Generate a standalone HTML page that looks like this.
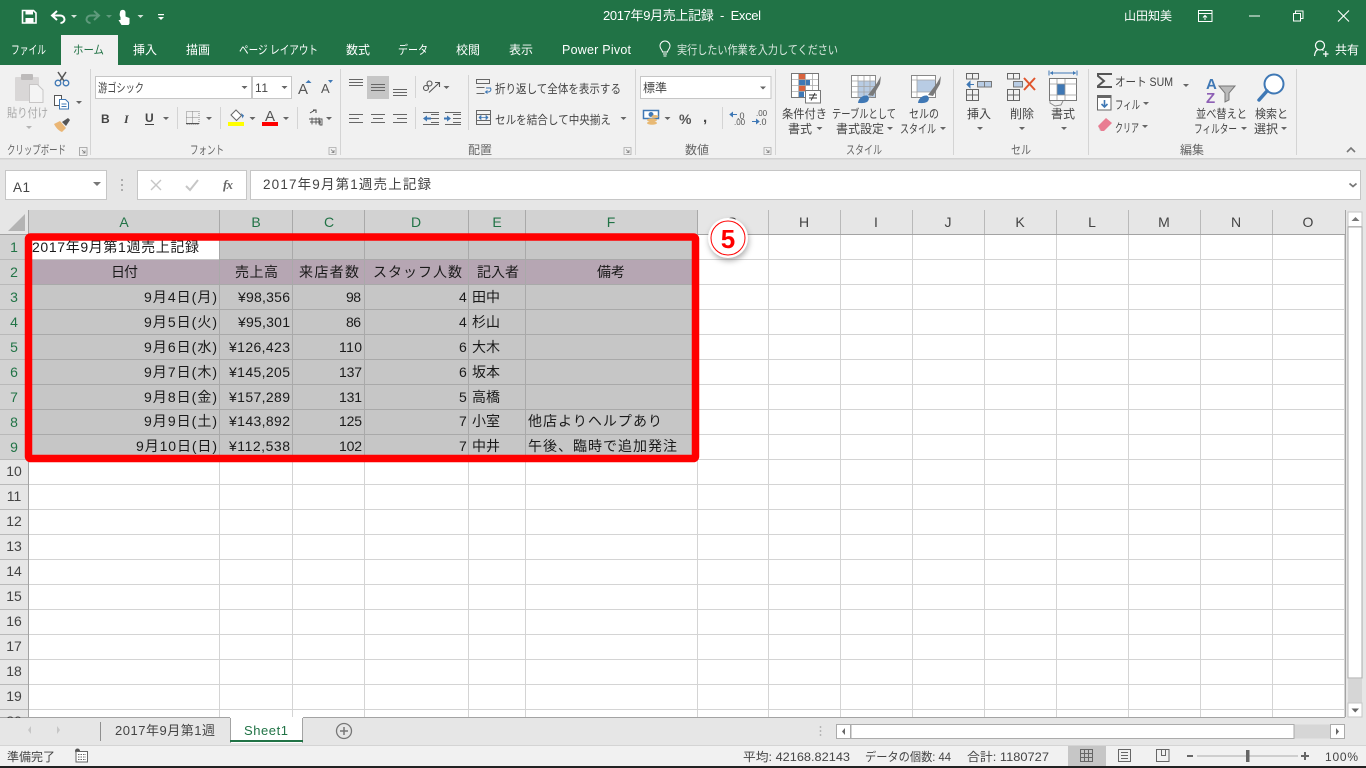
<!DOCTYPE html>
<html lang="ja">
<head>
<meta charset="utf-8">
<title>2017年9月売上記録 - Excel</title>
<style>
html,body{margin:0;padding:0;width:1366px;height:768px;overflow:hidden;background:#e6e6e6}
svg{display:block;position:absolute;left:0;top:0}
text{font-family:"Liberation Sans","Noto Sans CJK JP",sans-serif;white-space:pre}
.w{fill:#fff;font-size:12px}
.t{fill:#fff;font-size:12px}
.r{fill:#444;font-size:12px}
.g{fill:#666;font-size:12px}
.c{fill:#1a1a1a;font-size:14px}
.h{fill:#217346;font-size:14px}
.n{fill:#444;font-size:14px}
</style>
</head>
<body>
<svg width="1366" height="768" viewBox="0 0 1366 768" xmlns="http://www.w3.org/2000/svg">
<!-- Backgrounds -->
<rect width="1366" height="768" fill="#e6e6e6"/>
<rect width="1366" height="65" fill="#217346"/>
<rect y="65" width="1366" height="93" fill="#f1f1f1"/>
<rect y="158" width="1366" height="1.5" fill="#d2d2d2"/>
<rect x="61" y="35" width="57" height="30" fill="#f1f1f1"/>

<!-- QAT -->
<path d="M22.5 10.5h11l2.5 2.5v10h-13.500z" fill="none" stroke="#fff" stroke-width="1.600"/>
<rect x="25.500" y="10.500" width="7.500" height="4" fill="#fff"/><rect x="25.500" y="18" width="8" height="5" fill="#fff"/>
<path d="M57 11l-5 4.500 5 4.500M52.500 15.500h7.500c3.500 0 4.500 2.500 4.500 4s-1.500 3.500-4 3.500" fill="none" stroke="#fff" stroke-width="2"/>
<path d="M71 15h6l-3 3z" fill="#d4e4da"/>
<path d="M94 11l5 4.500-5 4.500M98.500 15.500H91c-3.500 0-4.500 2.500-4.500 4s1.500 3.500 4 3.500" fill="none" stroke="#5f9a7c" stroke-width="2"/>
<path d="M106 15h6l-3 3z" fill="#5f9a7c"/>
<g transform="translate(0 1)">
<path d="M120 11.500c0-3.500 5.500-3.500 5.500 0v4l4 1.500v5.500l-1 1.500h-7l-3-5 2 0v-3c-1-1-1-3-.5-4.500z" fill="#fff"/>
</g>
<path d="M137.500 15h6l-3 3z" fill="#d4e4da"/>
<rect x="158" y="14" width="6" height="1.200" fill="#fff"/><path d="M158 17h6l-3 3z" fill="#fff"/>

<!-- Title -->
<text x="603" y="20" class="t" textLength="158" style="font-size:13px">2017年9月売上記録  -  Excel</text>
<text x="1124" y="20" class="t" textLength="48" style="font-size:12px">山田知美</text>
<path d="M1198.500 10.500h13.500v11h-13.500zM1198.500 13.500h13.500M1205 20v-4M1203 17.500l2-2 2 2" fill="none" stroke="#fff"/>
<rect x="1249" y="15.500" width="11" height="1" fill="#fff"/>
<path d="M1293.500 13.500h7v7.500h-7zM1295.500 13.500v-2.500h7.500v7.500h-2.500" fill="none" stroke="#fff"/>
<path d="M1338 10.500l11 11M1349 10.500l-11 11" stroke="#fff" stroke-width="1.100"/>

<!-- Tabs -->
<text x="11" y="54" class="w" textLength="35" lengthAdjust="spacingAndGlyphs">ファイル</text>
<text x="73" y="54" style="fill:#217346;font-size:12px" textLength="31" lengthAdjust="spacingAndGlyphs">ホーム</text>
<text x="133" y="54" class="w" textLength="24">挿入</text>
<text x="186" y="54" class="w" textLength="24">描画</text>
<text x="239" y="54" class="w" textLength="79" lengthAdjust="spacingAndGlyphs">ページ レイアウト</text>
<text x="346" y="54" class="w" textLength="24">数式</text>
<text x="398" y="54" class="w" textLength="30" lengthAdjust="spacingAndGlyphs">データ</text>
<text x="456" y="54" class="w" textLength="24">校閲</text>
<text x="509" y="54" class="w" textLength="24">表示</text>
<text x="562" y="54" class="w" textLength="69" style="font-size:12.500px">Power Pivot</text>
<path d="M662.500 52c0-2-2.500-3-2.500-6a5 5 0 0 1 10 0c0 3-2.500 4-2.500 6zM663 54h4M663.500 56h3" fill="none" stroke="#fff"/>
<text x="677" y="54" style="fill:#dbe8e0;font-size:12px" textLength="161" lengthAdjust="spacingAndGlyphs">実行したい作業を入力してください</text>
<circle cx="1320" cy="45.500" r="4.500" fill="none" stroke="#fff" stroke-width="1.200"/>
<path d="M1314.500 56c.5-4.500 2-6 3.500-6.500M1322 49.500l1.500 1M1323 54h5.500M1325.800 51v6" fill="none" stroke="#fff" stroke-width="1.200"/>
<text x="1335" y="54" class="w" textLength="24">共有</text>

<!-- Ribbon separators -->
<g fill="#d4d4d4">
<rect x="90" y="69" width="1" height="86"/><rect x="340" y="69" width="1" height="86"/><rect x="635" y="69" width="1" height="86"/><rect x="775" y="69" width="1" height="86"/><rect x="953" y="69" width="1" height="86"/><rect x="1088" y="69" width="1" height="86"/><rect x="1296" y="69" width="1" height="86"/>
<rect x="177" y="107" width="1" height="22"/><rect x="220" y="107" width="1" height="22"/><rect x="297" y="107" width="1" height="22"/>
<rect x="415" y="76" width="1" height="22"/><rect x="415" y="107" width="1" height="22"/><rect x="468" y="75" width="1" height="55"/><rect x="722" y="107" width="1" height="22"/>
</g>

<!-- Clipboard -->
<rect x="15" y="77" width="24" height="24" rx="1" fill="#d9d7d7"/>
<rect x="21" y="74" width="12" height="6" rx="1" fill="#bdbbbb"/>
<path d="M29.500 84.500h8l5.500 5.500v12.500H29.500z" fill="#f4f4f4" stroke="#c8c6c6"/>
<text x="7" y="117" textLength="41" lengthAdjust="spacingAndGlyphs" style="fill:#a8a8a8;font-size:12px">貼り付け</text>
<path d="M26 126h6l-3 3z" fill="#b5b5b5"/>
<path d="M58 72l6 9M66 72l-6 9" stroke="#555" stroke-width="1.500"/>
<circle cx="58" cy="83" r="2.800" fill="none" stroke="#3f78b5" stroke-width="1.300"/><circle cx="66" cy="83" r="2.800" fill="none" stroke="#3f78b5" stroke-width="1.300"/>
<path d="M54.500 95.500h7v10h-7z" fill="#fff" stroke="#555"/><path d="M59.500 99.500h6l3 3v6.500h-9z" fill="#fff" stroke="#3f78b5"/>
<path d="M61.500 104h5M61.500 106.500h5" stroke="#3f78b5"/>
<path d="M76 101h6l-3 3z" fill="#666"/>
<path d="M54 124l6-3 6 7-4 4c-3-1-6-4-8-8z" fill="#eab675"/><path d="M62 122l6-4 2 2-4 6z" fill="#555"/>
<text x="7" y="154" class="g" textLength="59" lengthAdjust="spacingAndGlyphs">クリップボード</text>
<path d="M79 147.500h8v8M79.500 148v7.500h7.500" fill="none" stroke="#999" stroke-width=".8"/><path d="M82 150l3 3M85 150.500v2.500h-2.500" fill="none" stroke="#777" stroke-width=".8"/>

<!-- Font -->
<rect x="95.500" y="76.500" width="156" height="22" fill="#fff" stroke="#c6c6c6"/>
<rect x="252.500" y="76.500" width="39" height="22" fill="#fff" stroke="#c6c6c6"/>
<text x="98" y="92" class="r" textLength="46" lengthAdjust="spacingAndGlyphs">游ゴシック</text>
<text x="255" y="92" class="r" textLength="13">11</text>
<path d="M241.500 86h6l-3 3zM281.500 86h6l-3 3z" fill="#666"/>
<text x="298" y="94" style="fill:#555;font-size:15px" textLength="11">A</text>
<path d="M305.500 83l3-3 3 3z" fill="#3f78b5"/>
<text x="321" y="93" style="fill:#555;font-size:13px" textLength="9">A</text>
<path d="M328 80h5l-2.500 3z" fill="#3f78b5"/>
<text x="101" y="123" style="fill:#444;font-size:12px;font-weight:bold">B</text>
<text x="124" y="123" style="fill:#444;font-size:12px;font-style:italic;font-family:'Liberation Serif',serif;font-weight:bold">I</text>
<text x="145" y="122" style="fill:#444;font-size:12px;font-weight:bold">U</text>
<rect x="145" y="124" width="9" height="1" fill="#444"/>
<path d="M163 117h6l-3 3zM206 117h6l-3 3zM249.500 117h6l-3 3zM283 117h6l-3 3zM326 117h6l-3 3z" fill="#666"/>
<path d="M186.500 111.500h12.500v12.500h-12.500z" fill="none" stroke="#888" stroke-dasharray="1 1"/>
<path d="M192.500 111.500v12.500M186.500 117.500h12.500" stroke="#888" stroke-dasharray="1 1"/><rect x="186" y="123" width="13" height="1.200" fill="#555"/>
<path d="M231 115l5-5 5.500 5.500-5 5z" fill="#fff" stroke="#666"/><path d="M241 113l3 2.500-1.500 3z" fill="#3f78b5"/>
<rect x="228" y="122" width="16" height="4" fill="#ffff00"/>
<text x="265" y="121" style="fill:#555;font-size:15px;" textLength="11">A</text>
<rect x="262" y="122" width="16" height="4" fill="#ff0000"/>
<path d="M310 113l5-3M313 110h3v3" fill="none" stroke="#444"/>
<path d="M309 119h13v6h-2v-5M312 117.500v7M316 117.500v7M319 117.500v7M310 122h11" fill="none" stroke="#555" stroke-width=".9"/>
<text x="190" y="154" class="g" textLength="34" lengthAdjust="spacingAndGlyphs">フォント</text>
<path d="M329 147.500h7v7h-7z" fill="none" stroke="#aaa" stroke-width=".8"/><path d="M331 149.500l3 3M334 150v2.500h-2.500" fill="none" stroke="#777" stroke-width=".8"/>

<!-- Alignment -->
<rect x="367" y="76" width="22" height="23" fill="#c6c6c6"/>
<g stroke="#666" stroke-width="1">
<path d="M349 79.500h14M349 82.500h14M349 85.500h14"/>
<path d="M371 84.500h14M371 87.500h14M371 90.500h14"/>
<path d="M393 89.500h14M393 92.500h14M393 95.500h14"/>
<path d="M349 114.500h14M349 118.500h10M349 122.500h14"/>
<path d="M371 114.500h14M373 118.500h10M371 122.500h14"/>
<path d="M393 114.500h14M397 118.500h10M393 122.500h14"/>
<path d="M431 114.500h8M431 118.500h8M431 122.500h8M423 124.500h16M423 112.500h16"/>
<path d="M453 114.500h8M453 118.500h8M453 122.500h8M445 124.500h16M445 112.500h16"/>
</g>
<path d="M423 118.500l4-3v2h4v2h-4v2zM451 118.500l-4-3v2h-3v2h3v2z" fill="#3f78b5"/>
<circle cx="426" cy="88" r="2.500" fill="none" stroke="#555" stroke-width="1.100"/>
<circle cx="429.500" cy="83.500" r="2.500" fill="none" stroke="#555" stroke-width="1.100"/>
<path d="M429 92.500l10-9.500M435 82.500h4.500v4.500" fill="none" stroke="#555" stroke-width="1.100"/>
<path d="M443.500 86h6l-3 3z" fill="#666"/>
<path d="M476.500 79.500h13v4h-13zM476.500 87.500h8M476.500 93.500h8" fill="none" stroke="#666"/>
<path d="M486 88h4.500c1 2 0 4-2.500 4h-2M487.500 90.500l-2 1.500 2 1.500" fill="none" stroke="#3f78b5"/>
<text x="495" y="93" class="r" textLength="126" lengthAdjust="spacingAndGlyphs">折り返して全体を表示する</text>
<path d="M476.500 110.500h14v14h-14zM476.500 114.500h14M476.500 120.500h14" fill="none" stroke="#666"/>
<path d="M479 117.500h9M479 117.500l2-2v4zM488 117.500l-2-2v4z" fill="#3f78b5" stroke="#3f78b5" stroke-width=".7"/>
<text x="495" y="124" class="r" textLength="116" lengthAdjust="spacingAndGlyphs">セルを結合して中央揃え</text>
<path d="M620.500 117h6l-3 3z" fill="#666"/>
<text x="468" y="154" class="g" textLength="24">配置</text>
<path d="M624 147.500h7v7h-7z" fill="none" stroke="#aaa" stroke-width=".8"/><path d="M626 149.500l3 3M629 150v2.500h-2.500" fill="none" stroke="#777" stroke-width=".8"/>

<!-- Number -->
<rect x="640.500" y="76.500" width="130.500" height="22" fill="#fff" stroke="#c6c6c6"/>
<text x="643" y="92" class="r" textLength="24">標準</text>
<path d="M760 86.500h6l-3 3z" fill="#666"/>
<rect x="643.500" y="110.500" width="15" height="8" fill="#fff" stroke="#3f78b5" stroke-width="1.500"/><circle cx="651" cy="114.500" r="2.500" fill="#3f78b5"/>
<ellipse cx="652" cy="120" rx="5" ry="1.800" fill="#e8b974"/><ellipse cx="652" cy="123" rx="5" ry="1.800" fill="#e8b974"/><ellipse cx="655" cy="116.500" rx="3.500" ry="1.500" fill="#e8b974"/>
<path d="M664.500 117h6l-3 3z" fill="#666"/>
<text x="679" y="124" style="fill:#555;font-size:14px;font-weight:bold" textLength="14">%</text>
<text x="703" y="122" style="fill:#444;font-size:15px;font-weight:bold">,</text>
<text x="737" y="119" style="fill:#555;font-size:9px">.0</text><text x="734" y="125" style="fill:#555;font-size:8px">.00</text>
<path d="M730 114.500h7M730 114.500l2.500-2v4z" fill="#3f78b5" stroke="#3f78b5"/>
<text x="756" y="116" style="fill:#555;font-size:8px">.00</text><text x="759" y="125" style="fill:#555;font-size:9px">.0</text>
<path d="M752 121.500h7M759 121.500l-2.500-2v4z" fill="#3f78b5" stroke="#3f78b5"/>
<text x="685" y="154" class="g" textLength="24">数値</text>
<path d="M764 147.500h7v7h-7z" fill="none" stroke="#aaa" stroke-width=".8"/><path d="M766 149.500l3 3M769 150v2.500h-2.500" fill="none" stroke="#777" stroke-width=".8"/>

<!-- Styles -->
<rect x="791.500" y="73.500" width="27" height="24" fill="#fff" stroke="#777"/>
<rect x="799" y="74" width="6" height="6" fill="#d9633d"/><rect x="799" y="80" width="11" height="5.500" fill="#3f78b5"/><rect x="799" y="85.500" width="7" height="5.500" fill="#d9633d"/><rect x="799" y="91" width="5" height="6" fill="#3f78b5"/>
<path d="M798.500 74v23M805.500 74v23M812.500 74v23M792 79.500h26M792 85.500h26M792 91.500h26" stroke="#aaa" stroke-width=".8" fill="none"/>
<rect x="805.500" y="90.500" width="15" height="12.500" fill="#fff" stroke="#777"/>
<path d="M809 95h8M809 98h8M815 93l-4 7.500" stroke="#333" stroke-width=".9" fill="none"/>
<rect x="851.500" y="75.500" width="24" height="22" fill="#fff" stroke="#888"/><rect x="858" y="81" width="17" height="16" fill="#b8cce4"/>
<path d="M852 81h24M852 86.500h24M852 92h24M858 76v22M864 76v22M870 76v22" stroke="#a3a3a3" stroke-width=".8"/>
<path d="M868 95l9-12 4-7-1 8-7 12z" fill="#7a7a7a"/><path d="M858 103c.5-5 5-8 9-7.500 3 2 2 5 0 6.500-3 1.500-6 1-9 1z" fill="#3f78b5"/>
<rect x="911.500" y="75.500" width="24" height="22" fill="#fff" stroke="#888"/><rect x="917" y="80" width="18" height="12" fill="#b8cce4"/>
<path d="M912 80h24M912 92h24M917 76v22" stroke="#a3a3a3" stroke-width=".8"/>
<path d="M928 95l9-12 4-7-1 8-7 12z" fill="#7a7a7a"/><path d="M918 103c.5-5 5-8 9-7.500 3 2 2 5 0 6.500-3 1.500-6 1-9 1z" fill="#3f78b5"/>
<text x="782" y="118" class="r" textLength="45" lengthAdjust="spacingAndGlyphs">条件付き</text>
<text x="788" y="133" class="r" textLength="24">書式</text><path d="M816.500 127h6l-3 3z" fill="#666"/>
<text x="832" y="118" class="r" textLength="64" lengthAdjust="spacingAndGlyphs">テーブルとして</text>
<text x="836" y="133" class="r" textLength="48">書式設定</text><path d="M887 127h6l-3 3z" fill="#666"/>
<text x="909" y="118" class="r" textLength="30" lengthAdjust="spacingAndGlyphs">セルの</text>
<text x="900" y="133" class="r" textLength="36" lengthAdjust="spacingAndGlyphs">スタイル</text><path d="M940 127h6l-3 3z" fill="#666"/>
<text x="846" y="154" class="g" textLength="36" lengthAdjust="spacingAndGlyphs">スタイル</text>

<!-- Cells -->
<g fill="none" stroke="#666">
<path d="M966.500 73.500h6v5.500h-6zM972.500 73.500h6v5.500h-6zM966.500 89.500h12v11h-12zM972.500 89.500v11M966.500 95h12"/>
<path d="M1007.500 73.500h6v5.500h-6zM1013.500 73.500h6v5.500h-6zM1007.500 89.500h12v11h-12zM1013.500 89.500v11M1007.500 95h12"/>
</g>
<rect x="977.500" y="81.500" width="7" height="5.500" fill="#b8cce4" stroke="#777"/><rect x="984.500" y="81.500" width="7" height="5.500" fill="#b8cce4" stroke="#777"/>
<path d="M967 84.500h7M967 84.500l3-3v6z" fill="#3f78b5" stroke="#3f78b5"/>
<rect x="1013.500" y="81.500" width="9" height="5.500" fill="#b8cce4" stroke="#777"/>
<path d="M1024 78l11 12M1035 78l-11 12" stroke="#e0552d" stroke-width="2"/>
<path d="M1049 70.500v5M1077 70.500v5M1050 73h26" stroke="#3f78b5" fill="none"/>
<path d="M1050 73l3-2v4zM1076 73l-3-2v4z" fill="#3f78b5"/>
<rect x="1049.500" y="78.500" width="27" height="22" fill="#fff" stroke="#777"/>
<rect x="1057" y="84" width="8" height="11" fill="#3f78b5"/>
<path d="M1057 79v21M1065 79v21M1050 84h27M1050 95h27" stroke="#999" stroke-width=".8"/>
<path d="M1050 101v2l5 3 6-1 2-4" fill="none" stroke="#888" stroke-width=".9"/>
<text x="967" y="118" class="r" textLength="24">挿入</text><path d="M977 127h6l-3 3z" fill="#666"/>
<text x="1010" y="118" class="r" textLength="24">削除</text><path d="M1019 127h6l-3 3z" fill="#666"/>
<text x="1051" y="118" class="r" textLength="24">書式</text><path d="M1061 127h6l-3 3z" fill="#666"/>
<text x="1011" y="154" class="g" textLength="20" lengthAdjust="spacingAndGlyphs">セル</text>

<!-- Editing -->
<path d="M1112 74h-14v2l6 5-6 5v1h14" fill="none" stroke="#555" stroke-width="2"/>
<text x="1115" y="86" class="r" textLength="58" lengthAdjust="spacingAndGlyphs">オート SUM</text><path d="M1183 84h6l-3 3z" fill="#666"/>
<rect x="1097.500" y="95.500" width="13.500" height="14.500" fill="#fff" stroke="#666"/><rect x="1097" y="95" width="14" height="3" fill="#666"/>
<path d="M1104.500 100v7M1101.500 104l3 3 3-3" fill="none" stroke="#3f78b5" stroke-width="1.600"/>
<text x="1115" y="109" class="r" textLength="25" lengthAdjust="spacingAndGlyphs">フィル</text><path d="M1143 102h6l-3 3z" fill="#666"/>
<path d="M1098 126l8-8 6 5-8 8h-3z" fill="#e97d92"/><path d="M1098 126l3 5h-1z" fill="#ccc"/>
<text x="1115" y="132" class="r" textLength="24" lengthAdjust="spacingAndGlyphs">クリア</text><path d="M1142 125h6l-3 3z" fill="#666"/>
<text x="1206" y="89" style="fill:#3f78b5;font-size:15px;font-weight:bold" textLength="11">A</text>
<text x="1206" y="103" style="fill:#8d5fb5;font-size:15px;font-weight:bold" textLength="11">Z</text>
<path d="M1219 86h16l-6 7v7l-4 2v-9z" fill="#bbb" stroke="#777"/>
<circle cx="1274" cy="84" r="9.500" fill="#fff" stroke="#3f78b5" stroke-width="2"/>
<path d="M1267 91l-8 9" stroke="#3f78b5" stroke-width="3.500" stroke-linecap="round"/>
<text x="1196" y="118" class="r" textLength="51" lengthAdjust="spacingAndGlyphs">並べ替えと</text>
<text x="1194" y="133" class="r" textLength="43" lengthAdjust="spacingAndGlyphs">フィルター</text><path d="M1241 127h6l-3 3z" fill="#666"/>
<text x="1255" y="118" class="r" textLength="33" lengthAdjust="spacingAndGlyphs">検索と</text>
<text x="1254" y="133" class="r" textLength="24">選択</text><path d="M1281 127h6l-3 3z" fill="#666"/>
<text x="1180" y="154" class="g" textLength="24">編集</text>
<path d="M1347 152l4-4 4 4" fill="none" stroke="#777" stroke-width="1.600"/>

<!-- Formula bar -->
<rect x="5.500" y="170.500" width="101" height="29" fill="#fff" stroke="#c6c6c6"/>
<text x="13" y="192" style="fill:#444;font-size:13.500px" textLength="17">A1</text>
<path d="M93 182h8l-4 4z" fill="#777"/>
<path d="M122 179v2M122 184v2M122 189v2" stroke="#999" stroke-width="1.500"/>
<rect x="137.500" y="170.500" width="109" height="29" fill="#fff" stroke="#c6c6c6"/>
<path d="M151 180l10 10M161 180l-10 10" stroke="#c6c6c6" stroke-width="1.400"/>
<path d="M186 186l4 4 8-10" fill="none" stroke="#c6c6c6" stroke-width="2"/>
<text x="223" y="189" style="fill:#666;font-size:13px;font-family:'Liberation Serif',serif;font-style:italic;font-weight:bold" textLength="10">fx</text>
<rect x="250.500" y="170.500" width="1110" height="29" fill="#fff" stroke="#c6c6c6"/>
<text x="263" y="189" style="fill:#444;font-size:13.500px" textLength="168">2017年9月第1週売上記録</text>
<path d="M1349.500 183.500l3.500 3 3.500-3" fill="none" stroke="#777" stroke-width="1.800"/>

<!-- Grid -->
<rect x="0" y="210" width="1345" height="507" fill="#fff"/>
<rect x="0" y="210" width="1345" height="25" fill="#e6e6e6"/>
<rect x="0" y="235" width="28" height="482" fill="#e6e6e6"/>
<rect x="29" y="210" width="668" height="24" fill="#d2d2d2"/>
<rect x="0" y="235" width="28" height="225" fill="#d2d2d2"/>
<rect x="29" y="235" width="668" height="225" fill="#c6c6c6"/>
<rect x="29" y="235" width="190" height="24" fill="#fff"/>
<rect x="29" y="260" width="668" height="25" fill="#b6a6b3"/>
<path d="M8 231l17-17v17z" fill="#b4b4b4"/>

<g fill="#d4d4d4">
<rect x="29" y="484" width="1316" height="1"/><rect x="29" y="509" width="1316" height="1"/><rect x="29" y="534" width="1316" height="1"/><rect x="29" y="559" width="1316" height="1"/><rect x="29" y="584" width="1316" height="1"/><rect x="29" y="609" width="1316" height="1"/><rect x="29" y="634" width="1316" height="1"/><rect x="29" y="659" width="1316" height="1"/><rect x="29" y="684" width="1316" height="1"/><rect x="29" y="709" width="1316" height="1"/>
<rect x="697" y="259" width="648" height="1"/><rect x="697" y="284" width="648" height="1"/><rect x="697" y="309" width="648" height="1"/><rect x="697" y="334" width="648" height="1"/><rect x="697" y="359" width="648" height="1"/><rect x="697" y="384" width="648" height="1"/><rect x="697" y="409" width="648" height="1"/><rect x="697" y="434" width="648" height="1"/><rect x="29" y="459" width="1316" height="1"/>
<rect x="219" y="460" width="1" height="257"/><rect x="292" y="460" width="1" height="257"/><rect x="364" y="460" width="1" height="257"/><rect x="468" y="460" width="1" height="257"/><rect x="525" y="460" width="1" height="257"/><rect x="697" y="235" width="1" height="482"/>
<rect x="768" y="235" width="1" height="482"/><rect x="840" y="235" width="1" height="482"/><rect x="912" y="235" width="1" height="482"/><rect x="984" y="235" width="1" height="482"/><rect x="1056" y="235" width="1" height="482"/><rect x="1128" y="235" width="1" height="482"/><rect x="1200" y="235" width="1" height="482"/><rect x="1272" y="235" width="1" height="482"/><rect x="1344" y="235" width="1" height="482"/>
</g>
<!-- selection grid lines -->
<g fill="#a9a9a9">
<rect x="29" y="284" width="668" height="1"/><rect x="29" y="309" width="668" height="1"/><rect x="29" y="334" width="668" height="1"/><rect x="29" y="359" width="668" height="1"/><rect x="29" y="384" width="668" height="1"/><rect x="29" y="409" width="668" height="1"/><rect x="29" y="434" width="668" height="1"/><rect x="219" y="259" width="478" height="1"/>
<rect x="219" y="235" width="1" height="225"/><rect x="292" y="235" width="1" height="225"/><rect x="364" y="235" width="1" height="225"/><rect x="468" y="235" width="1" height="225"/><rect x="525" y="235" width="1" height="225"/>
<rect x="219" y="210" width="1" height="24"/><rect x="292" y="210" width="1" height="24"/><rect x="364" y="210" width="1" height="24"/><rect x="468" y="210" width="1" height="24"/><rect x="525" y="210" width="1" height="24"/><rect x="697" y="210" width="1" height="24"/>
</g>
<!-- header lines -->
<g fill="#b9b9b9">
<rect x="768" y="210" width="1" height="24"/><rect x="840" y="210" width="1" height="24"/><rect x="912" y="210" width="1" height="24"/><rect x="984" y="210" width="1" height="24"/><rect x="1056" y="210" width="1" height="24"/><rect x="1128" y="210" width="1" height="24"/><rect x="1200" y="210" width="1" height="24"/><rect x="1272" y="210" width="1" height="24"/>
<rect x="0" y="259" width="28" height="1"/><rect x="0" y="284" width="28" height="1"/><rect x="0" y="309" width="28" height="1"/><rect x="0" y="334" width="28" height="1"/><rect x="0" y="359" width="28" height="1"/><rect x="0" y="384" width="28" height="1"/><rect x="0" y="409" width="28" height="1"/><rect x="0" y="434" width="28" height="1"/><rect x="0" y="459" width="28" height="1"/><rect x="0" y="484" width="28" height="1"/><rect x="0" y="509" width="28" height="1"/><rect x="0" y="534" width="28" height="1"/><rect x="0" y="559" width="28" height="1"/><rect x="0" y="584" width="28" height="1"/><rect x="0" y="609" width="28" height="1"/><rect x="0" y="634" width="28" height="1"/><rect x="0" y="659" width="28" height="1"/><rect x="0" y="684" width="28" height="1"/><rect x="0" y="709" width="28" height="1"/>
</g>
<rect x="28" y="210" width="1" height="507" fill="#a3a3a3"/>
<rect x="0" y="234" width="1345" height="1" fill="#a3a3a3"/>
<rect x="1345" y="210" width="1" height="507" fill="#a3a3a3"/>
<rect x="0" y="717" width="1345" height="1" fill="#a3a3a3"/>

<!-- Column heads -->
<g text-anchor="middle">
<text x="124" y="227" class="h">A</text><text x="256" y="227" class="h">B</text><text x="329" y="227" class="h">C</text><text x="416" y="227" class="h">D</text><text x="497" y="227" class="h">E</text><text x="611" y="227" class="h">F</text>
<text x="732" y="227" class="n">G</text>
<text x="804" y="227" class="n">H</text><text x="876" y="227" class="n">I</text><text x="948" y="227" class="n">J</text><text x="1020" y="227" class="n">K</text><text x="1092" y="227" class="n">L</text><text x="1164" y="227" class="n">M</text><text x="1236" y="227" class="n">N</text><text x="1308" y="227" class="n">O</text>
<text x="14" y="252" class="h">1</text><text x="14" y="277" class="h">2</text><text x="14" y="302" class="h">3</text><text x="14" y="327" class="h">4</text><text x="14" y="352" class="h">5</text><text x="14" y="377" class="h">6</text><text x="14" y="402" class="h">7</text><text x="14" y="427" class="h">8</text><text x="14" y="452" class="h">9</text>
<text x="14" y="476" class="n">10</text><text x="14" y="501" class="n">11</text><text x="14" y="526" class="n">12</text><text x="14" y="551" class="n">13</text><text x="14" y="576" class="n">14</text><text x="14" y="601" class="n">15</text><text x="14" y="626" class="n">16</text><text x="14" y="651" class="n">17</text><text x="14" y="676" class="n">18</text><text x="14" y="701" class="n">19</text><text x="14" y="726" class="n">20</text>
</g>

<!-- Cells text -->
<text x="32" y="252" class="c" textLength="167">2017年9月第1週売上記録</text>
<text x="111" y="277" class="c" textLength="27">日付</text>
<text x="235" y="277" class="c" textLength="43">売上高</text>
<text x="299" y="277" class="c" textLength="60">来店者数</text>
<text x="373" y="277" class="c" textLength="89">スタッフ人数</text>
<text x="477" y="277" class="c" textLength="42">記入者</text>
<text x="597" y="277" class="c" textLength="28">備考</text>

<text x="144" y="302" class="c" textLength="73">9月4日(月)</text><text x="238" y="302" class="c" textLength="52">¥98,356</text><text x="346" y="302" class="c" textLength="15">98</text><text x="459" y="302" class="c" textLength="7">4</text><text x="472" y="302" class="c" textLength="28">田中</text>
<text x="144" y="327" class="c" textLength="73">9月5日(火)</text><text x="238" y="327" class="c" textLength="52">¥95,301</text><text x="346" y="327" class="c" textLength="15">86</text><text x="459" y="327" class="c" textLength="7">4</text><text x="472" y="327" class="c" textLength="28">杉山</text>
<text x="144" y="352" class="c" textLength="73">9月6日(水)</text><text x="229" y="352" class="c" textLength="61">¥126,423</text><text x="339" y="352" class="c" textLength="23">110</text><text x="459" y="352" class="c" textLength="7">6</text><text x="472" y="352" class="c" textLength="28">大木</text>
<text x="144" y="377" class="c" textLength="73">9月7日(木)</text><text x="229" y="377" class="c" textLength="61">¥145,205</text><text x="339" y="377" class="c" textLength="23">137</text><text x="459" y="377" class="c" textLength="7">6</text><text x="472" y="377" class="c" textLength="28">坂本</text>
<text x="144" y="402" class="c" textLength="73">9月8日(金)</text><text x="229" y="402" class="c" textLength="61">¥157,289</text><text x="339" y="402" class="c" textLength="23">131</text><text x="459" y="402" class="c" textLength="7">5</text><text x="472" y="402" class="c" textLength="28">高橋</text>
<text x="144" y="426" class="c" textLength="73">9月9日(土)</text><text x="229" y="426" class="c" textLength="61">¥143,892</text><text x="339" y="426" class="c" textLength="23">125</text><text x="459" y="426" class="c" textLength="7">7</text><text x="472" y="426" class="c" textLength="28">小室</text><text x="528" y="426" class="c" textLength="134">他店よりヘルプあり</text>
<text x="136" y="451" class="c" textLength="81">9月10日(日)</text><text x="229" y="451" class="c" textLength="61">¥112,538</text><text x="339" y="451" class="c" textLength="23">102</text><text x="459" y="451" class="c" textLength="7">7</text><text x="472" y="451" class="c" textLength="28">中井</text><text x="528" y="451" class="c" textLength="149">午後、臨時で追加発注</text>

<!-- Red box -->
<rect x="28.500" y="237" width="667" height="221.500" rx="2" fill="none" stroke="#ff0000" stroke-width="7.500"/>

<!-- Badge -->
<circle cx="728" cy="238" r="20" fill="#fff" style="filter:drop-shadow(1px 3px 3px rgba(0,0,0,.3))"/>
<circle cx="728" cy="238" r="17" fill="none" stroke="#ff0000" stroke-width="1"/>
<text x="728" y="248" text-anchor="middle" style="fill:#ff0000;font-size:26px;font-weight:bold">5</text>

<!-- Vertical scrollbar -->
<rect x="1346" y="210" width="20" height="507" fill="#e6e6e6"/>
<rect x="1348" y="212" width="14" height="14.500" fill="#fff" stroke="#c6c6c6"/>
<path d="M1351.500 221l4-4 4 4z" fill="#777"/>
<rect x="1348" y="227" width="14" height="451" fill="#fff" stroke="#ababab"/>
<rect x="1348" y="679" width="14" height="24" fill="#d6d6d6"/>
<rect x="1348" y="703" width="14" height="14" fill="#fff" stroke="#c6c6c6"/>
<path d="M1351.500 708.500h7.500l-3.750 4z" fill="#666"/>

<!-- Sheet tabs -->
<rect x="0" y="718" width="1366" height="27" fill="#e6e6e6"/>
<path d="M31 726v8l-3-4zM57 726v8l3-4z" fill="#c6c6c6"/>
<rect x="100" y="722" width="1" height="19" fill="#8f8f8f"/>
<text x="115" y="735" style="fill:#444;font-size:13px" textLength="100">2017年9月第1週</text>
<rect x="230" y="717" width="73" height="26" fill="#fff"/>
<path d="M230.500 718v25M302.500 718v25" stroke="#a3a3a3"/>
<rect x="230" y="740" width="73" height="2" fill="#217346"/>
<text x="244" y="735" style="fill:#217346;font-size:13px" textLength="44">Sheet1</text>
<circle cx="344" cy="731" r="7.500" fill="none" stroke="#777" stroke-width="1.300"/>
<path d="M340 731h8M344 727v8" stroke="#777" stroke-width="1.500"/>
<path d="M820.500 726v2M820.500 730v2M820.500 734v2" stroke="#b5b5b5" stroke-width="1.500"/>

<!-- Horizontal scrollbar -->
<rect x="836" y="724.500" width="509" height="14" fill="#d6d6d6"/>
<rect x="836.500" y="724.500" width="14" height="14" fill="#fff" stroke="#ababab"/>
<rect x="851" y="724.500" width="443" height="14" fill="#fff" stroke="#ababab"/>
<rect x="1330.500" y="724.500" width="14" height="14" fill="#fff" stroke="#ababab"/>
<path d="M845 728v7l-3-3.500zM1336 728v7l3-3.500z" fill="#666"/>

<!-- Status bar -->
<rect x="0" y="745" width="1366" height="21" fill="#f1f1f1"/>
<rect x="0" y="745" width="1366" height="1" fill="#d4d4d4"/>
<rect x="0" y="766" width="1366" height="2" fill="#222"/>
<text x="7" y="761" class="r" textLength="48">準備完了</text>
<circle cx="77.500" cy="751" r="2.500" fill="#555"/>
<path d="M76 751.500h11.500v10.500h-11.500z" fill="#fff" stroke="#666"/>
<path d="M78 754.500h8M78 757h8M78 759.500h8" stroke="#666" stroke-dasharray="1.500 1" fill="none"/>
<text x="743" y="761" class="r" textLength="107" lengthAdjust="spacingAndGlyphs">平均: 42168.82143</text>
<text x="865" y="761" class="r" textLength="86" lengthAdjust="spacingAndGlyphs">データの個数: 44</text>
<text x="967" y="761" class="r" textLength="82" lengthAdjust="spacingAndGlyphs">合計: 1180727</text>
<rect x="1068" y="746" width="38" height="20" fill="#c6c6c6"/>
<path d="M1080.500 749.500h12v12h-12zM1084.500 749.500v12M1088.500 749.500v12M1080.500 753.500h12M1080.500 757.500h12" fill="none" stroke="#666"/>
<path d="M1118.500 749.500h12v12h-12zM1121 752.500h7M1121 755.500h7M1121 758.500h7" fill="none" stroke="#666"/>
<path d="M1156.500 749.500h12.500v12h-12.500zM1161.500 749.500v6h4v-6" fill="none" stroke="#666"/>
<rect x="1187" y="755" width="6" height="2" fill="#666"/>
<rect x="1197" y="755.500" width="101" height="1" fill="#aaa"/>
<rect x="1246" y="750" width="3.500" height="12" fill="#666"/>
<path d="M1301 756h8M1305 752v8" stroke="#666" stroke-width="2"/>
<text x="1325" y="761" class="r" textLength="33">100%</text>
</svg>
</body>
</html>
